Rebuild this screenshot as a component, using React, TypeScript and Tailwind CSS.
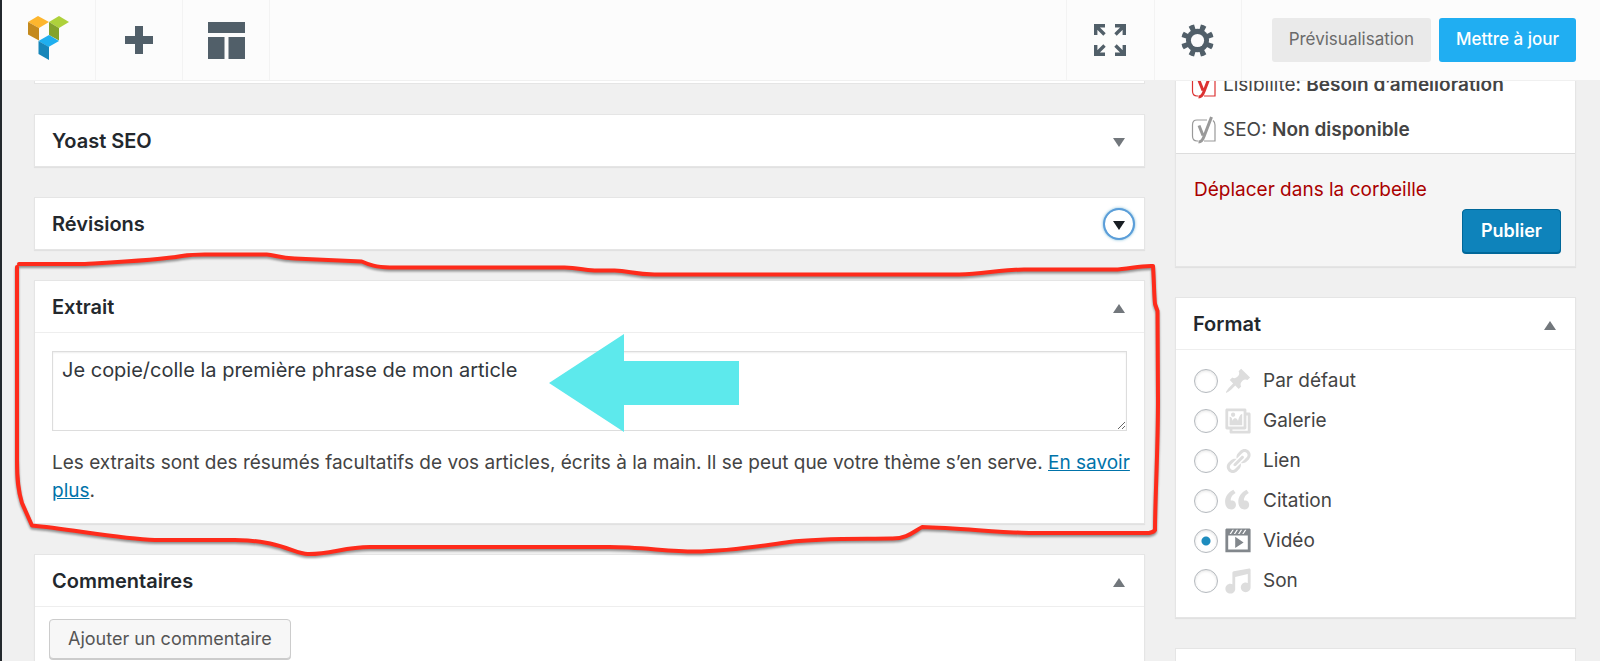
import type { ReactNode } from "react";

type PostboxProps = {
  title: string;
  open?: boolean;
  focused?: boolean;
  children?: ReactNode;
};

type PostFormat = {
  id: string;
  label: string;
  path: string;
};

const formats: PostFormat[] = [
  {
    id: "standard",
    label: "Par défaut",
    path: "M10.44 3.02l1.82-1.82 6.36 6.35-1.83 1.82c-1.05-.68-2.48-.57-3.41.36l-.75.75c-.92.93-1.04 2.35-.35 3.41l-1.83 1.82-2.41-2.41-2.8 2.79c-.42.42-3.38 2.71-3.8 2.29s1.86-3.39 2.28-3.81l2.79-2.79L4.1 9.36l1.83-1.82c1.05.69 2.48.57 3.4-.36l.75-.75c.93-.92 1.05-2.35.36-3.41z",
  },
  {
    id: "gallery",
    label: "Galerie",
    path: "M16 4h1.96c.57 0 1.04.47 1.04 1.04v12.92c0 .57-.47 1.04-1.04 1.04H5.04C4.47 19 4 18.53 4 17.96V16H2.04C1.47 16 1 15.53 1 14.96V2.04C1 1.47 1.47 1 2.04 1h12.92c.57 0 1.04.47 1.04 1.04V4zM3 14h11V3H3v11zm5-8.5C8 4.67 7.33 4 6.5 4S5 4.67 5 5.5 5.67 7 6.5 7 8 6.33 8 5.5zm2 4.5s1-5 3-5v8H4V7c2 0 2 3 2 3s.33-2 2-2 2 2 2 2zm7 7V6h-1v8.96c0 .57-.47 1.04-1.04 1.04H6v1h11z",
  },
  {
    id: "link",
    label: "Lien",
    path: "M17.74 2.76c1.68 1.69 1.68 4.41 0 6.1l-1.53 1.52c-1.12 1.12-2.7 1.47-4.14 1.09l2.62-2.61.76-.77.76-.76c.84-.84.84-2.2 0-3.04-.84-.85-2.2-.85-3.04 0l-.77.76-3.38 3.38c-.37-1.44-.02-3.02 1.1-4.14l1.52-1.53c1.69-1.68 4.42-1.68 6.1 0zM8.59 13.43l5.34-5.34c.42-.42.42-1.1 0-1.52-.44-.43-1.13-.39-1.53 0l-5.33 5.34c-.42.42-.42 1.1 0 1.52.44.43 1.13.39 1.52 0zm-.76 2.29l4.14-4.15c.38 1.44.03 3.02-1.09 4.14l-1.52 1.53c-1.69 1.68-4.41 1.68-6.1 0-1.68-1.68-1.68-4.42 0-6.1l1.53-1.52c1.12-1.12 2.7-1.47 4.14-1.1l-4.14 4.15c-.85.84-.85 2.2 0 3.05.84.84 2.2.84 3.04 0z",
  },
  {
    id: "quote",
    label: "Citation",
    path: "M8.54 12.74c0-.87-.24-1.61-.72-2.22-.73-.92-2.14-1.03-2.96-.85-.34-1.93 1.3-4.39 3.42-5.45L6.65 1.94C3.45 3.46.31 6.96.85 11.37 1.19 14.16 2.8 16 5.08 16c1 0 1.83-.29 2.48-.88.66-.59.98-1.38.98-2.38zm9.43 0c0-.87-.24-1.61-.72-2.22-.73-.92-2.14-1.03-2.96-.85-.34-1.93 1.3-4.39 3.42-5.45l-1.63-2.28c-3.2 1.52-6.34 5.02-5.8 9.43.34 2.79 1.95 4.63 4.23 4.63 1 0 1.83-.29 2.48-.88.66-.59.98-1.38.98-2.38z",
  },
  {
    id: "video",
    label: "Vidéo",
    path: "M2 1h16c.55 0 1 .45 1 1v16l-18-.02V2c0-.55.45-1 1-1zm4 1L4 5h1l2-3H6zm4 0H9L7 5h1zm3 0h-1l-2 3h1zm3 0h-1l-2 3h1zm1 14V6H3v10h14zM8 7l6 4-6 4V7z",
  },
  {
    id: "audio",
    label: "Son",
    path: "M6.99 3.08l11.02-2c.55-.08.99.45.99 1V14.5c0 1.94-1.57 3.5-3.5 3.5S12 16.44 12 14.5c0-1.93 1.57-3.5 3.5-3.5.54 0 1.04.14 1.5.35V5.08l-9 2V16c-.24 1.7-1.74 3-3.5 3C2.57 19 1 17.44 1 15.5 1 13.57 2.57 12 4.5 12c.54 0 1.04.14 1.5.35V4.08c0-.55.44-.91.99-1z",
  },
];

function Postbox({ title, open = false, focused = false, children }: PostboxProps) {
  return (
    <section className="border border-[#e5e5e5] bg-white shadow-[0_1px_1px_rgba(0,0,0,0.06)]">
      <div
        className={`flex items-center justify-between pl-[17px] pr-[11px] ${
          open ? "h-[52px] border-b border-[#eeeeee]" : "h-[51px]"
        }`}
      >
        <h2 className="text-xl font-semibold text-[#23282d]">{title}</h2>
        <button
          type="button"
          aria-label={title}
          aria-expanded={open}
          className={`flex h-7 w-7 items-center justify-center rounded-full ${
            focused
              ? "text-[#191e23] shadow-[0_0_0_2px_#5b9dd9,0_0_3px_2px_rgba(30,140,190,0.6)]"
              : "text-[#72777c]"
          }`}
        >
          <svg viewBox="0 0 12 9" className="mt-1 h-[9px] w-3" fill="currentColor">
            <path d={open ? "M6 0l6 9H0z" : "M0 0h12L6 9z"} />
          </svg>
        </button>
      </div>
      {children}
    </section>
  );
}

function YoastIcon({ color }: { color: string }) {
  return (
    <svg viewBox="0 0 26 28" className="h-7 w-[26px] shrink-0" fill="none" stroke={color}>
      <path d="M16 4H6Q1.500 4 1.500 9v11Q1.500 25 6 25h1M13 25h11V9q0-3-2-4.500" strokeWidth="1.200" />
      <path d="M8 9.500l4 10M20.500 1L13 20.500q-2 5.500-5.500 5.500" strokeWidth="3" />
    </svg>
  );
}

function TopBar() {
  return (
    <header className="relative z-10 flex h-[81px] shrink-0 border-b border-[#f0f0f0] bg-[#fcfcfc] text-[#515f69]">
      <a href="#" aria-label="Visual Composer" className="flex w-[94px] items-center border-r border-[#f3f3f3] pb-1 pl-[26px]">
        <svg viewBox="0 0 41 44" className="h-11 w-[41px]">
          <path d="M0 6L10 0l11 6-10 6z" fill="#fdb62e" />
          <path d="M0 6l11 6v12.500L0 18.500z" fill="#c48a1e" />
          <path d="M21 6L31 0l10 6-10 6z" fill="#aed13b" />
          <path d="M21 6l10 6v12.500L21 19z" fill="#83a22b" />
          <path d="M10.500 25L21 19l10 6-10.500 6z" fill="#1fafef" />
          <path d="M10.500 25l10.500 6v13l-10.500-6z" fill="#1786b9" />
        </svg>
      </a>
      <button type="button" aria-label="Ajouter un élément" className="flex w-[87px] items-center justify-center border-r border-[#f3f3f3]">
        <svg viewBox="0 0 28 28" className="h-7 w-7" fill="currentColor">
          <path d="M10 0h8v10h10v8H18v10h-8V18H0v-8h10z" />
        </svg>
      </button>
      <button type="button" aria-label="Modèles" className="flex w-[87px] items-center justify-center border-r border-[#f3f3f3]">
        <svg viewBox="0 0 37 37" className="h-[37px] w-[37px]" fill="currentColor">
          <path d="M0 0h37v11H0zM0 15h16.500v22H0zM20.500 15H37v22H20.500z" />
        </svg>
      </button>

      <div className="ml-auto flex">
        <button type="button" aria-label="Plein écran" className="flex w-[88px] items-center justify-center border-l border-[#f3f3f3]">
          <svg viewBox="0 0 32 32" className="h-8 w-8" fill="none" stroke="currentColor" strokeWidth="3.400">
            <path d="M11 1.700H1.700V11M2 2l8.500 8.500M21 1.700h9.300V11M30 2l-8.500 8.500M11 30.300H1.700V21M2 30l8.500-8.500M21 30.300h9.300V21M30 30l-8.500-8.500" />
          </svg>
        </button>
        <button type="button" aria-label="Réglages" className="flex w-[88px] items-center justify-center border-x border-[#f3f3f3]">
          <svg viewBox="-17 -17 34 34" className="h-[33px] w-[33px]" fill="currentColor">
            <g transform="rotate(22.500)">
              {[0, 45, 90, 135].map((angle) => (
                <path
                  key={angle}
                  d="M-3 -16.500Q0 -17.500 3 -16.500L2.400 -10V10L3 16.500Q0 17.500 -3 16.500L-2.400 10V-10z"
                  transform={`rotate(${angle})`}
                />
              ))}
              <circle r="12" />
            </g>
            <circle r="6.800" fill="#fcfcfc" />
          </svg>
        </button>
        <div className="flex items-center gap-2 pl-[30px] pr-6 text-[17px]">
          <button type="button" className="h-11 rounded-[3px] bg-[#eaeaea] px-[17px] text-[#6b6b6b]">
            Prévisualisation
          </button>
          <button type="button" className="h-11 rounded-[3px] bg-[#20aef2] px-[17px] font-medium text-white">
            Mettre à jour
          </button>
        </div>
      </div>
    </header>
  );
}

function ExcerptBox() {
  return (
    <div className="relative">
      <Postbox title="Extrait" open>
        <div className="px-[17px] py-[18px]">
          <textarea
            aria-label="Extrait"
            defaultValue="Je copie/colle la première phrase de mon article"
            className="block h-20 w-full resize-y border border-[#dddddd] bg-white px-[9px] py-1 text-xl leading-7 text-[#32373c] shadow-[inset_0_1px_2px_rgba(0,0,0,0.07)]"
          />
          <p className="-mr-2 mt-[18px] leading-7">
            Les extraits sont des résumés facultatifs de vos articles, écrits à la main. Il se peut
            que votre thème s’en serve.{" "}
            <a href="#" className="text-[#0073aa] underline">
              En savoir plus
            </a>
            .
          </p>
        </div>
      </Postbox>

      {/* hand-drawn outline around the box */}
      <svg
        viewBox="10 240 1160 320"
        preserveAspectRatio="none"
        className="pointer-events-none absolute -left-6 -top-10 z-10 h-80 w-[calc(100%+48px)] drop-shadow-[0_2px_1px_rgba(0,0,0,0.4)]"
        fill="none"
        stroke="#fe2b1b"
        strokeWidth="4"
        strokeLinecap="round"
        strokeLinejoin="round"
      >
        <path d="M19 264H85C120 262 160 260 182 256Q192 254.500 205 254.500H267C275 255 280 258 295 258.500L362 261.500C370 265 376 267 390 267.500H565C580 268 582 270 595 270.500H615C630 271 635 274.500 655 274.500H960C985 274 1000 269.500 1025 269.500H1115C1130 269 1140 265.500 1154 266C1155 280 1155 295 1156 304L1158.500 311L1159 400C1159 450 1156 500 1156 530Q1155 532 1150 533H1030C1000 532.500 960 528 923 527C915 531 908 539 892 538.500C860 539 820 538 790 542C760 546 730 551.500 695 551.500C670 551.500 640 547 610 547H370C345 547 330 554.500 308 554C295 554 280 540 235 540H155C120 539 70 529 32 525.500L22 503C18 490 17 480 17 460V267" />
      </svg>
      <svg
        viewBox="0 0 190 98"
        className="pointer-events-none absolute left-[515px] top-[54px] h-[98px] w-[190px]"
        fill="#5de9ec"
      >
        <path d="M0 49L75 0v27h115v44H75v27z" />
      </svg>
    </div>
  );
}

function PublishBox() {
  return (
    <section className="border border-[#e5e5e5] bg-white shadow-[0_1px_1px_rgba(0,0,0,0.06)]">
      <ul className="flex flex-col gap-[17px] px-[15px] pb-[9px]">
        <li className="flex h-7 items-center gap-[6px]">
          <YoastIcon color="#dc3232" />
          <span>
            Lisibilité: <strong className="font-semibold">Besoin d’amélioration</strong>
          </span>
        </li>
        <li className="flex h-7 items-center gap-[6px]">
          <YoastIcon color="#999999" />
          <span>
            SEO: <strong className="font-semibold">Non disponible</strong>
          </span>
        </li>
      </ul>
      <div className="flex flex-col border-t border-[#dddddd] bg-[#f5f5f5] px-[14px] pb-[13px] pt-[22px]">
        <a href="#" className="self-start px-1 leading-7 text-[#aa0000]">
          Déplacer dans la corbeille
        </a>
        <button
          type="button"
          className="mt-[5px] h-11 self-end rounded-[4px] border border-[#006799] bg-[#0e83bb] px-[18px] text-lg font-semibold text-white shadow-[0_1px_0_#006799]"
        >
          Publier
        </button>
      </div>
    </section>
  );
}

function FormatBox() {
  return (
    <Postbox title="Format" open>
      <fieldset aria-label="Format" className="flex flex-col px-[18px] pb-4 pt-[11px]">
        {formats.map((format) => (
          <label key={format.id} className="group flex h-10 items-center">
            <input
              type="radio"
              name="post_format"
              value={format.id}
              defaultChecked={format.id === "video"}
              className="h-6 w-6 appearance-none rounded-full border border-[#b4b9be] bg-white shadow-[inset_0_1px_3px_rgba(0,0,0,0.12)] checked:bg-[radial-gradient(circle,#1e8cbe_4px,transparent_5px)]"
            />
            <svg
              viewBox="0 0 20 20"
              className="ml-[6px] h-7 w-7 text-[#dddddd] group-has-checked:text-[#82878c]"
              fill="currentColor"
            >
              <path d={format.path} />
            </svg>
            <span className="ml-[11px]">{format.label}</span>
          </label>
        ))}
      </fieldset>
    </Postbox>
  );
}

export default function App() {
  return (
    <div className="flex h-screen flex-col overflow-hidden border-l-2 border-[#23282d] bg-[#f0f0f0] font-['Inter',sans-serif] text-[19px] text-[#444444]">
      <TopBar />
      <main className="flex min-h-0 flex-1 items-start gap-[30px] pl-8 pr-6">
        <div className="flex min-w-0 flex-1 flex-col gap-[30px]">
          <div className="h-[3px] border-x border-b border-[#e5e5e5] bg-white" />
          <Postbox title="Yoast SEO" />
          <Postbox title="Révisions" focused />
          <ExcerptBox />
          <Postbox title="Commentaires" open>
            <div className="px-[14px] py-3">
              <button
                type="button"
                className="h-10 rounded-[4px] border border-[#cccccc] bg-[#f7f7f7] px-[18px] text-lg text-[#555555] shadow-[0_1px_0_#cccccc]"
              >
                Ajouter un commentaire
              </button>
            </div>
          </Postbox>
        </div>
        <aside className="-mt-[11px] flex w-[401px] shrink-0 flex-col gap-[30px]">
          <PublishBox />
          <FormatBox />
          <div className="h-[52px] border border-[#e5e5e5] bg-white" />
        </aside>
      </main>
    </div>
  );
}
